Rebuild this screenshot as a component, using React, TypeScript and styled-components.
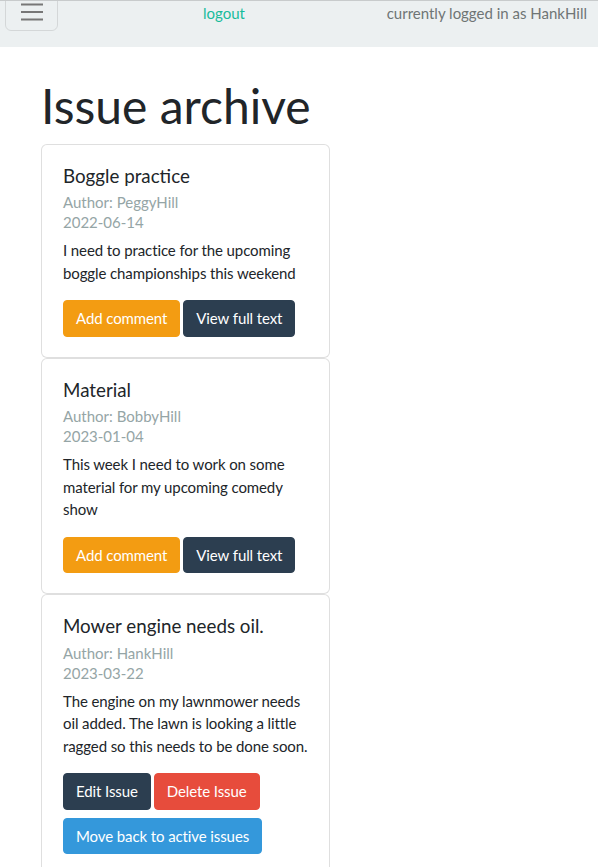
import React from "react";
import styled, { createGlobalStyle } from "styled-components";

const Global = createGlobalStyle`
  html, body { margin: 0; padding: 0; background: #fff; }
  body {
    font-family: Lato, "Open Sans", "Liberation Sans", sans-serif;
    font-size: 15px;
    line-height: 1.5;
    color: #212529;
  }
  * { box-sizing: border-box; }
`;

const Navbar = styled.nav`
  display: flex;
  align-items: flex-start;
  height: 47px;
  padding: 0 11px 0 5px;
  background: #ecf0f1;
  border-top: 1px solid #c8cbcc;
  overflow: hidden;
`;

const Toggler = styled.button`
  display: flex;
  align-items: center;
  justify-content: center;
  width: 53px;
  height: 38px;
  margin-top: -8px;
  padding: 0;
  background: transparent;
  border: 1px solid rgba(0, 0, 0, 0.1);
  border-radius: 6px;
  cursor: pointer;
`;

const NavLink = styled.a`
  margin-left: 145px;
  padding-top: 1px;
  color: #18bc9c;
  text-decoration: none;
`;

const NavText = styled.span`
  margin-left: auto;
  padding-top: 1px;
  color: #6f7575;
`;

const Main = styled.main`
  padding: 0 0 0 41px;
`;

const Title = styled.h1`
  margin: 30px 0 9px;
  font-size: 48px;
  font-weight: 400;
  line-height: 1.2;
  color: #212529;
`;

const CardList = styled.div`
  display: flex;
  flex-direction: column;
  width: 289px;
`;

const Card = styled.div`
  border: 1px solid rgba(0, 0, 0, 0.125);
  border-radius: 6px;
  background: #fff;
  padding: 20px 20px 20px 21px;
`;

const CardTitle = styled.h5`
  margin: 0 0 8px;
  font-size: 18.75px;
  font-weight: 400;
  line-height: 1.2;
`;

const Meta = styled.div`
  margin-top: -3px;
  margin-bottom: 7px;
  font-size: 15px;
  line-height: 20px;
  color: #95a5a6;
`;

const Body = styled.p`
  margin: 0 0 16px;
  letter-spacing: -0.1px;
`;

const ButtonRow = styled.div`
  display: flex;
  flex-wrap: wrap;
  gap: 8px 3px;
`;

const variants: Record<string, string> = {
  warning: "#f39c12",
  dark: "#2c3e50",
  danger: "#e74c3c",
  info: "#3498db",
};

const Button = styled.button<{ $variant: string }>`
  font-family: inherit;
  font-size: 15px;
  line-height: 1.5;
  letter-spacing: -0.1px;
  padding: 6px 12px;
  border: 1px solid ${(p) => variants[p.$variant]};
  background: ${(p) => variants[p.$variant]};
  color: #fff;
  border-radius: 4px;
  cursor: pointer;
`;

type Issue = {
  title: string;
  author: string;
  date: string;
  text: string;
  own?: boolean;
};

const issues: Issue[] = [
  {
    title: "Boggle practice",
    author: "PeggyHill",
    date: "2022-06-14",
    text: "I need to practice for the upcoming boggle championships this weekend",
  },
  {
    title: "Material",
    author: "BobbyHill",
    date: "2023-01-04",
    text: "This week I need to work on some material for my upcoming comedy show",
  },
  {
    title: "Mower engine needs oil.",
    author: "HankHill",
    date: "2023-03-22",
    text: "The engine on my lawnmower needs oil added. The lawn is looking a little ragged so this needs to be done soon.",
    own: true,
  },
];

export default function App() {
  return (
    <>
      <Global />
      <Navbar>
        <Toggler aria-label="Toggle navigation">
          <svg width="24" height="24" viewBox="0 0 24 24">
            <path
              d="M1 4.5h22M1 12h22M1 19.5h22"
              stroke="#777"
              strokeWidth="2"
              strokeLinecap="butt"
            />
          </svg>
        </Toggler>
        <NavLink href="#">logout</NavLink>
        <NavText>currently logged in as HankHill</NavText>
      </Navbar>
      <Main>
        <Title>Issue archive</Title>
        <CardList>
          {issues.map((i) => (
            <Card key={i.title}>
              <CardTitle>{i.title}</CardTitle>
              <Meta>
                Author: {i.author}
                <br />
                {i.date}
              </Meta>
              <Body>{i.text}</Body>
              {i.own ? (
                <ButtonRow>
                  <Button $variant="dark">Edit Issue</Button>
                  <Button $variant="danger">Delete Issue</Button>
                  <Button $variant="info">Move back to active issues</Button>
                </ButtonRow>
              ) : (
                <ButtonRow>
                  <Button $variant="warning">Add comment</Button>
                  <Button $variant="dark">View full text</Button>
                </ButtonRow>
              )}
            </Card>
          ))}
        </CardList>
      </Main>
    </>
  );
}
